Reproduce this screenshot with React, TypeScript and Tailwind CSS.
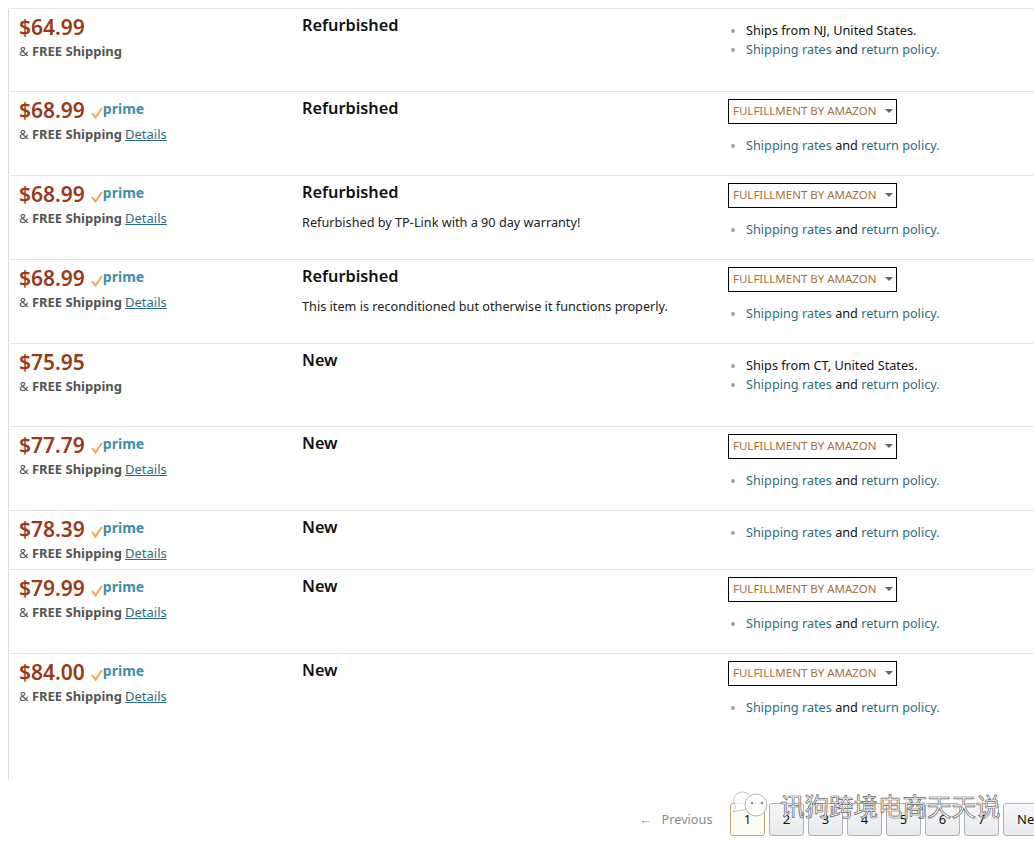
const font = { fontFamily: '"Noto Sans", sans-serif' };

type Offer = {
  price: string;
  prime?: boolean;
  condition: string;
  note?: string;
  ships?: string;
  fba?: boolean;
  height: string;
};

const offers: Offer[] = [
  { price: "$64.99", condition: "Refurbished", ships: "Ships from NJ, United States.", height: "h-[83px]" },
  { price: "$68.99", prime: true, condition: "Refurbished", fba: true, height: "h-[84px]" },
  { price: "$68.99", prime: true, condition: "Refurbished", note: "Refurbished by TP-Link with a 90 day warranty!", fba: true, height: "h-[84px]" },
  { price: "$68.99", prime: true, condition: "Refurbished", note: "This item is reconditioned but otherwise it functions properly.", fba: true, height: "h-[84px]" },
  { price: "$75.95", condition: "New", ships: "Ships from CT, United States.", height: "h-[83px]" },
  { price: "$77.79", prime: true, condition: "New", fba: true, height: "h-[84px]" },
  { price: "$78.39", prime: true, condition: "New", height: "h-[59px]" },
  { price: "$79.99", prime: true, condition: "New", fba: true, height: "h-[84px]" },
  { price: "$84.00", prime: true, condition: "New", fba: true, height: "h-[127px]" },
];

function PrimeLogo() {
  return (
    <span className="ml-[6px] flex items-center">
      <svg width="12" height="12" viewBox="0 0 12 12" className="mt-[5px]">
        <path d="M1 6 L4.5 10.5 L11 1" fill="none" stroke="#f3a847" strokeWidth="2" />
      </svg>
      <span className="text-[14px] leading-none font-bold text-[#3f8ea8] -mt-[3px]">prime</span>
    </span>
  );
}

function Bullet({ children }: { children: React.ReactNode }) {
  return (
    <li className="flex items-center h-[19px] text-[12.7px] text-[#111111]">
      <span className="w-[4px] h-[4px] rounded-full bg-[#a3a3a3] ml-[3px] mr-[11px]" />
      <span>{children}</span>
    </li>
  );
}

function OfferRow({ offer }: { offer: Offer }) {
  return (
    <div className={`flex border-t border-[#e4e4e4] ${offer.height}`}>
      <div className="w-[292px] pl-[9px] pt-[5px] shrink-0">
        <div className="flex items-center h-[27px]">
          <span className="text-[21px] leading-none font-semibold text-[#993a19]">{offer.price}</span>
          {offer.prime && <PrimeLogo />}
        </div>
        <div className="text-[13px] leading-[19px] mt-[1px] text-[#555555]">
          &amp; <span className="font-bold">FREE Shipping</span>
          {offer.prime && <span className="ml-[3px] text-[#2a6f80] underline">Details</span>}
        </div>
      </div>
      <div className="w-[426px] pt-[4px] shrink-0">
        <div className="text-[16.3px] leading-[24px] font-semibold text-[#111111]">{offer.condition}</div>
        {offer.note && <div className="text-[12.7px] leading-[19px] mt-[9px] text-[#222222]">{offer.note}</div>}
      </div>
      <div className="flex-1">
        {offer.fba && (
          <div className="mt-[7px] mb-[12px] w-[169px] h-[25px] border border-black flex items-center pl-[4px] text-[11.5px] text-[#a9703a]">
            <span className="-mt-[2px]">FULFILLMENT BY AMAZON</span>
            <span className="ml-[8px] w-0 h-0 border-x-[4px] border-x-transparent border-t-[4px] border-t-[#666666] -mt-[2px]" />
          </div>
        )}
        <ul className={offer.fba ? "" : "pt-[12px]"}>
          {offer.ships && <Bullet>{offer.ships}</Bullet>}
          <Bullet>
            <span className="text-[#2a6f80]">Shipping rates</span> and{" "}
            <span className="text-[#2a6f80]">return policy</span>
            <span className="text-[#2a6f80]">.</span>
          </Bullet>
        </ul>
      </div>
    </div>
  );
}

function PageButton({ label, active }: { label: string; active?: boolean }) {
  return (
    <div
      className={`w-[35px] h-[33px] shrink-0 rounded-[3px] border flex items-center justify-center text-[13px] text-[#111111] ${
        active ? "border-[#b8a96a] bg-[#fdfdf3]" : "border-[#adb1b8] bg-gradient-to-b from-[#f7f8fa] to-[#e7e9ec]"
      }`}
    >
      {label}
    </div>
  );
}

export default function App() {
  return (
    <div className="relative w-[1034px] h-[849px] overflow-hidden bg-white" style={font}>
      <div className="h-[8px]" />
      <div className="ml-[8px] h-[772px] border-l border-[#dddddd] pl-[1px]">
        {offers.map((offer, i) => (
          <OfferRow key={i} offer={offer} />
        ))}
      </div>

      <div className="mt-[23px] ml-[639px] w-[500px] flex items-center">
        <span className="w-[91px] shrink-0 text-[12.7px] text-[#8a8a8a]">←&nbsp;&nbsp;&nbsp;Previous</span>
        <div className="flex gap-[4px]">
          <PageButton label="1" active />
          {["2", "3", "4", "5", "6", "7"].map((n) => (
            <PageButton key={n} label={n} />
          ))}
          <div className="w-[50px] h-[33px] shrink-0 rounded-[3px] border border-[#adb1b8] bg-gradient-to-b from-[#f7f8fa] to-[#e7e9ec] pl-[13px] flex items-center text-[13px] text-[#111111]">
            Next
          </div>
        </div>
      </div>

      {/* watermark */}
      <div className="absolute left-[730px] top-[790px] flex items-center">
        <svg width="48" height="32" viewBox="0 0 48 32">
          <path d="M3 22 L6 17 A9 9 0 1 1 12 20 Z" fill="#ffffff" fillOpacity="0.75" stroke="#c4c4c4" strokeWidth="1" />
          <circle cx="26" cy="15" r="11" fill="#ffffff" fillOpacity="0.75" stroke="#b5b5b5" strokeWidth="1" />
          <circle cx="22" cy="13" r="1.2" fill="#888888" />
          <circle cx="32" cy="13" r="1.2" fill="#888888" />
        </svg>
        <span className="ml-[2px] text-[24.5px] leading-none text-white font-['Noto_Sans_CJK_SC',sans-serif] [-webkit-text-stroke:0.7px_#666666]">
          讯狗跨境电商天天说
        </span>
      </div>
    </div>
  );
}
